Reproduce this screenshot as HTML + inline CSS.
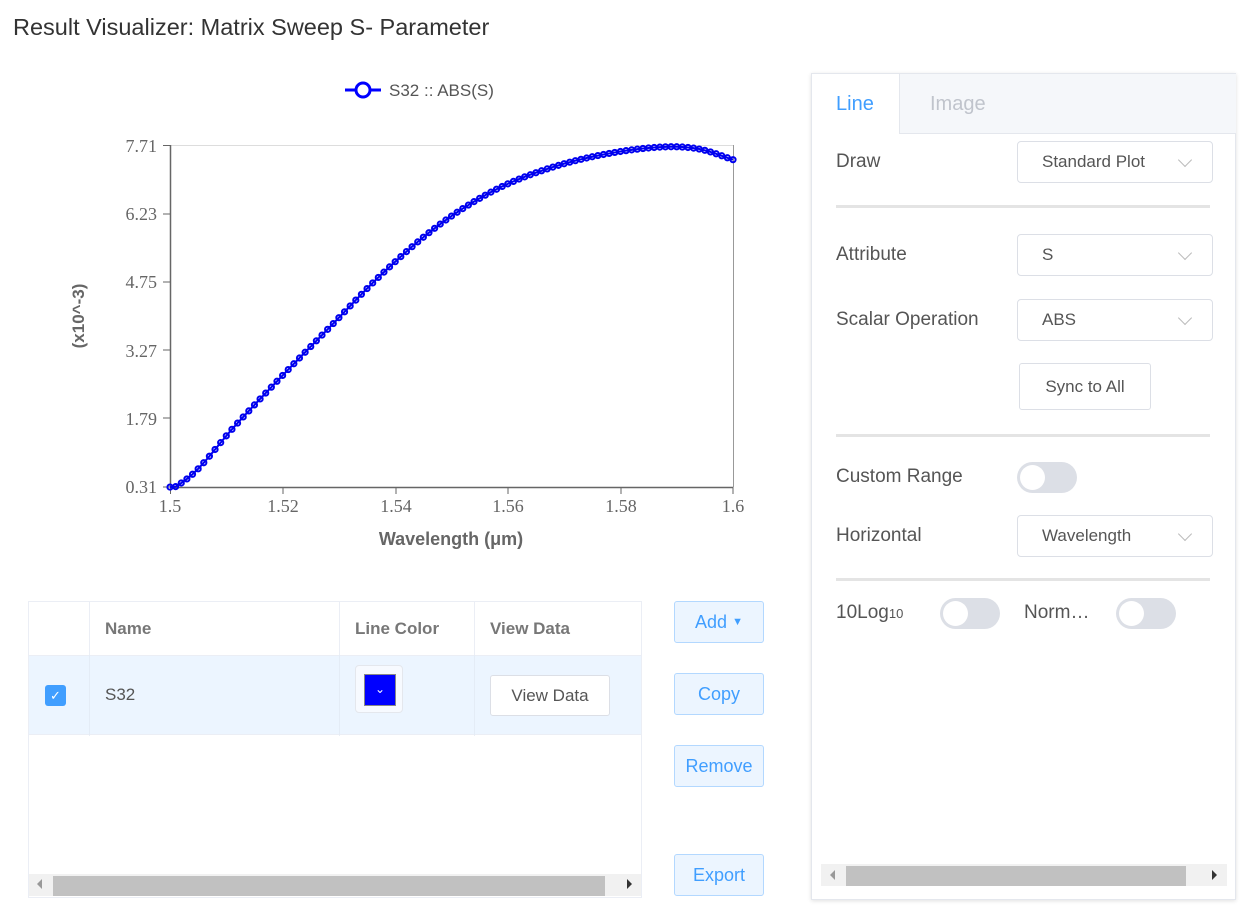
<!DOCTYPE html>
<html><head><meta charset="utf-8"><style>
*{box-sizing:border-box;margin:0;padding:0}
body{width:1243px;height:913px;background:#fff;font-family:"Liberation Sans",Arial,sans-serif;position:relative;overflow:hidden;color:#333}
.a{position:absolute}
.title{left:13px;top:14px;font-size:23.5px;color:#333}
.tbl{left:28px;top:601px;width:614px;height:297px;border:1px solid #ebeef5}
.th{font-weight:bold;color:#777;font-size:17px}
.btn{position:absolute;left:674px;width:90px;height:42px;border:1px solid #b3d8ff;background:#ecf5ff;color:#409eff;font-size:18px;text-align:center;line-height:40px;border-radius:3px}
.panel{left:811px;top:73px;width:425px;height:827px;border:1px solid #e4e7ed;box-shadow:0 1px 4px rgba(0,0,0,.12)}
.lbl{position:absolute;left:24px;font-size:19px;color:#555}
.sel{position:absolute;left:205px;width:196px;height:42px;border:1px solid #dcdfe6;border-radius:4px;font-size:17px;color:#555;padding-left:24px;line-height:40px}
.sel:after{content:"";position:absolute;right:22px;top:13px;width:9px;height:9px;border-right:1.5px solid #bbb;border-bottom:1.5px solid #bbb;transform:rotate(45deg)}
.hr{position:absolute;left:24px;width:374px;height:3px;background:#e4e4e4}
.sw{position:absolute;width:60px;height:31px;border-radius:16px;background:#dcdfe6}
.sw:after{content:"";position:absolute;left:3px;top:3px;width:25px;height:25px;border-radius:50%;background:#fff}
.sb{position:absolute;height:22px;background:#f1f1f1}
</style></head><body>
<div class="a title">Result Visualizer: Matrix Sweep S- Parameter</div>
<svg class="a" style="left:0;top:60px" width="800" height="500" font-family="Liberation Sans, Arial, sans-serif">
<g transform="translate(0,-60)">
<line x1="345" y1="90" x2="381" y2="90" stroke="#0000ff" stroke-width="3"/>
<circle cx="363" cy="90" r="7" fill="#fff" stroke="#0000ff" stroke-width="3"/>
<text x="389" y="96" font-size="17" fill="#555">S32 :: ABS(S)</text>
<g stroke="#ddd" stroke-width="1"><line x1="170" y1="145.5" x2="733" y2="145.5"/></g>
<line x1="733.5" y1="145" x2="733.5" y2="487" stroke="#999"/>
<line x1="170.5" y1="145" x2="170.5" y2="487" stroke="#666" stroke-width="1.5"/>
<line x1="170" y1="487.5" x2="733" y2="487.5" stroke="#666" stroke-width="1.5"/>
<g stroke="#666"><line x1="163" y1="145.5" x2="170" y2="145.5"/><line x1="163" y1="214" x2="170" y2="214"/><line x1="163" y1="282" x2="170" y2="282"/><line x1="163" y1="350" x2="170" y2="350"/><line x1="163" y1="418" x2="170" y2="418"/><line x1="163" y1="487" x2="170" y2="487"/>
<line x1="170.5" y1="487" x2="170.5" y2="494"/><line x1="283" y1="487" x2="283" y2="494"/><line x1="396" y1="487" x2="396" y2="494"/><line x1="508" y1="487" x2="508" y2="494"/><line x1="621" y1="487" x2="621" y2="494"/><line x1="733" y1="487" x2="733" y2="494"/></g>
<g font-family="Liberation Serif, serif" font-size="18" fill="#666" text-anchor="end">
<text x="157" y="152">7.71</text><text x="157" y="220">6.23</text><text x="157" y="288">4.75</text><text x="157" y="357">3.27</text><text x="157" y="425">1.79</text><text x="157" y="493">0.31</text></g>
<g font-family="Liberation Serif, serif" font-size="18" fill="#666" text-anchor="middle">
<text x="170" y="512">1.5</text><text x="283" y="512">1.52</text><text x="396" y="512">1.54</text><text x="508" y="512">1.56</text><text x="621" y="512">1.58</text><text x="733" y="512">1.6</text></g>
<text x="451" y="545" font-size="18" font-weight="bold" fill="#666" text-anchor="middle">Wavelength (μm)</text>
<text transform="translate(84,316) rotate(-90)" font-size="17" font-weight="bold" fill="#666" text-anchor="middle">(x10^-3)</text>
<g id="curve" fill="none" stroke="#0000ee" stroke-width="2"></g>
</g></svg>
<script>
var P=[[169,487],[175,487],[197,470],[234,427],[283,375],[327,330],[383,273],[439,225],[495,190],[550,168],[606,154],[662,147],[699,149],[734,160]];
function y(x){for(var i=0;i<P.length-1;i++){if(x<=P[i+1][0]){var a=P[Math.max(i-1,0)],b=P[i],c=P[i+1],d=P[Math.min(i+2,P.length-1)];var t=(x-b[0])/(c[0]-b[0]);var m1=(c[1]-a[1])/(c[0]-a[0])*(c[0]-b[0]),m2=(d[1]-b[1])/(d[0]-b[0])*(c[0]-b[0]);var t2=t*t,t3=t2*t;return (2*t3-3*t2+1)*b[1]+(t3-2*t2+t)*m1+(-2*t3+3*t2)*c[1]+(t3-t2)*m2;}}return P[P.length-1][1];}
var g=document.getElementById('curve'),s='',pts='';
for(var i=0;i<=100;i++){var x=170+i*5.63,yy=y(x);pts+=x+','+yy+' ';s+='<circle cx="'+x+'" cy="'+yy+'" r="2.6"/>';}
g.innerHTML='<polyline points="'+pts+'"/>'+s;
</script>
<div class="a tbl">
<div class="a" style="left:60px;top:0;width:1px;height:134px;background:#ebeef5"></div>
<div class="a" style="left:310px;top:0;width:1px;height:134px;background:#ebeef5"></div>
<div class="a" style="left:445px;top:0;width:1px;height:134px;background:#ebeef5"></div>
<div class="a" style="left:0;top:53px;width:612px;height:80px;background:#ecf5ff;border-top:1px solid #ebeef5;border-bottom:1px solid #ebeef5"></div>
<div class="a" style="left:60px;top:53px;width:1px;height:80px;background:#e4ecf6"></div>
<div class="a" style="left:310px;top:53px;width:1px;height:80px;background:#e4ecf6"></div>
<div class="a" style="left:445px;top:53px;width:1px;height:80px;background:#e4ecf6"></div>
<div class="a th" style="left:76px;top:17px">Name</div>
<div class="a th" style="left:326px;top:17px">Line Color</div>
<div class="a th" style="left:461px;top:17px">View Data</div>
<div class="a" style="left:16px;top:83px;width:21px;height:21px;background:#409eff;border-radius:3px;color:#fff;font-size:13px;text-align:center;line-height:21px">✓</div>
<div class="a" style="left:76px;top:83px;font-size:17px;color:#555">S32</div>
<div class="a" style="left:326px;top:63px;width:48px;height:48px;border:1px solid #e4e7ed;border-radius:4px;background:#f7faff"></div>
<div class="a" style="left:335px;top:72px;width:32px;height:32px;background:#0000ff;border:1px solid #888;color:#fff;font-size:12px;text-align:center;line-height:28px">⌄</div>
<div class="a" style="left:461px;top:73px;width:120px;height:41px;border:1px solid #dcdfe6;background:#fff;border-radius:3px;font-size:17px;color:#555;text-align:center;line-height:39px">View Data</div>
<div class="sb" style="left:0;top:272px;width:612px"></div>
<div class="a" style="left:24px;top:274px;width:552px;height:20px;background:#c1c1c1"></div>
<div class="a" style="left:8px;top:277px;width:0;height:0;border:5px solid transparent;border-right-color:#999;border-left:0"></div>
<div class="a" style="left:598px;top:277px;width:0;height:0;border:5px solid transparent;border-left-color:#333;border-right:0"></div>
</div>
<div class="btn" style="top:601px">Add <span style="font-size:11px;vertical-align:3px">▼</span></div>
<div class="btn" style="top:673px">Copy</div>
<div class="btn" style="top:745px">Remove</div>
<div class="btn" style="top:854px">Export</div>
<div class="a panel">
<div class="a" style="left:87px;top:0;width:337px;height:60px;background:#f5f7fa;border-bottom:1px solid #e4e7ed;border-left:1px solid #e4e7ed"></div>
<div class="a" style="left:24px;top:19px;font-size:20px;color:#409eff">Line</div>
<div class="a" style="left:118px;top:19px;font-size:20px;color:#c0c4cc">Image</div>
<div class="lbl" style="top:77px">Draw</div>
<div class="sel" style="top:67px">Standard Plot</div>
<div class="hr" style="top:131px"></div>
<div class="lbl" style="top:170px">Attribute</div>
<div class="sel" style="top:160px">S</div>
<div class="lbl" style="top:235px">Scalar Operation</div>
<div class="sel" style="top:225px">ABS</div>
<div class="a" style="left:207px;top:289px;width:132px;height:47px;border:1px solid #dcdfe6;border-radius:3px;font-size:17px;color:#555;text-align:center;line-height:45px">Sync to All</div>
<div class="hr" style="top:360px"></div>
<div class="lbl" style="top:392px">Custom Range</div>
<div class="sw" style="left:205px;top:388px"></div>
<div class="lbl" style="top:451px">Horizontal</div>
<div class="sel" style="top:441px">Wavelength</div>
<div class="hr" style="top:504px"></div>
<div class="lbl" style="top:528px">10Log<span style="font-size:13px">10</span></div>
<div class="sw" style="left:128px;top:524px"></div>
<div class="lbl" style="left:212px;top:528px">Norm…</div>
<div class="sw" style="left:304px;top:524px"></div>
<div class="sb" style="left:9px;top:790px;width:406px"></div>
<div class="a" style="left:34px;top:792px;width:340px;height:20px;background:#c1c1c1"></div>
<div class="a" style="left:18px;top:796px;width:0;height:0;border:5px solid transparent;border-right-color:#999;border-left:0"></div>
<div class="a" style="left:400px;top:796px;width:0;height:0;border:5px solid transparent;border-left-color:#333;border-right:0"></div>
</div>
</body></html>
